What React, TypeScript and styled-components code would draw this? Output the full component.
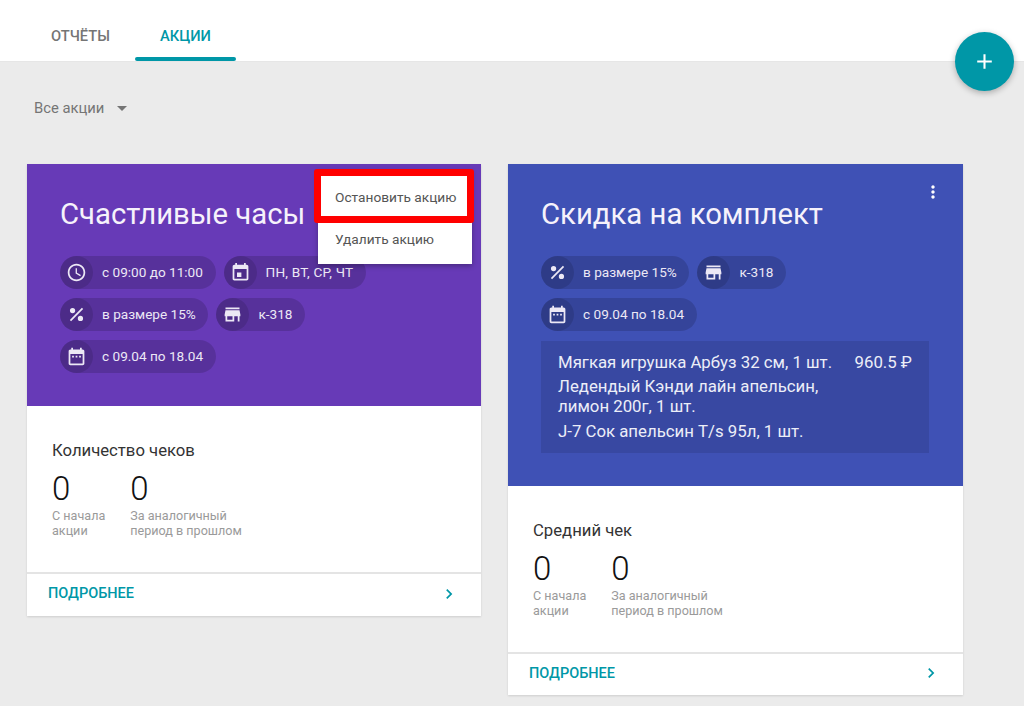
import React from "react";
import styled, { createGlobalStyle } from "styled-components";

const Global = createGlobalStyle`
  html, body { margin: 0; padding: 0; background: #ebebeb; overflow: hidden; }
  body { font-family: Roboto, "Liberation Sans", sans-serif; }
  * { box-sizing: border-box; }
`;

const TEAL = "#0097a7";

const Page = styled.div`
  position: relative;
  width: 1024px;
  height: 706px;
  overflow: hidden;
`;
const Header = styled.header`
  height: 62px;
  background: #fff;
  border-bottom: 1px solid #e6e6e6;
  display: flex;
  padding-left: 26px;
`;
const Tab = styled.div<{ $active?: boolean }>`
  position: relative;
  height: 61px;
  width: ${(p) => (p.$active ? 101 : 109)}px;
  padding-top: 27px;
  text-align: center;
  font-size: 14.7px;
  line-height: 18px;
  font-weight: 500;
  color: ${(p) => (p.$active ? TEAL : "#757575")};
  ${(p) =>
    p.$active &&
    `&::after { content: ""; position: absolute; left: 0; right: 0; bottom: 0; height: 4px; border-radius: 2px; background: ${TEAL}; }`}
`;
const Fab = styled.button`
  position: absolute;
  left: 955px;
  top: 32px;
  width: 59px;
  height: 59px;
  border: 0;
  border-radius: 50%;
  padding: 0;
  background: ${TEAL};
  box-shadow: 0 2px 6px rgba(0, 0, 0, 0.28);
  display: flex;
  align-items: center;
  justify-content: center;
  color: #fff;
`;
const Filter = styled.div`
  display: flex;
  align-items: center;
  height: 20px;
  margin: 36px 0 0 34px;
  font-size: 14.8px;
  color: #757575;
`;
const Caret = styled.span`
  width: 0;
  height: 0;
  margin-left: 13px;
  border-left: 5px solid transparent;
  border-right: 5px solid transparent;
  border-top: 5px solid #757575;
`;
const Cards = styled.main`
  display: flex;
  align-items: flex-start;
  gap: 27px;
  margin: 46px 0 0 27px;
`;
const Card = styled.section<{ $width: number }>`
  position: relative;
  flex: none;
  width: ${(p) => p.$width}px;
  background: #fff;
  box-shadow: 0 1px 2px rgba(0, 0, 0, 0.12);
`;
const Top = styled.div<{ $color: string }>`
  background: ${(p) => p.$color};
  padding: 32px 34px 33px 33px;
  color: #fff;
`;
const Title = styled.h2`
  margin: 0 0 24px;
  font-size: 29.3px;
  line-height: 36px;
  font-weight: 400;
  color: #f6f2fb;
`;
const Chips = styled.div`
  display: flex;
  flex-wrap: wrap;
  gap: 9px 8px;
`;
const Chip = styled.div<{ $tracking?: number }>`
  display: flex;
  align-items: center;
  height: 33px;
  border-radius: 17px;
  background: rgba(0, 0, 0, 0.15);
  padding: 0 12.6px 2px 0;
  font-size: 13.6px;
  letter-spacing: ${(p) => p.$tracking ?? 0}px;
  color: #ece8f5;
  white-space: nowrap;
`;
const ChipIcon = styled.span`
  width: 33px;
  height: 33px;
  margin: 0 9px -2px 0;
  border-radius: 50%;
  background: rgba(0, 0, 0, 0.12);
  display: flex;
  align-items: center;
  justify-content: center;
`;
const Products = styled.div`
  margin-top: 10px;
  padding: 11px 17px 12px;
  background: rgba(0, 0, 0, 0.1);
  font-size: 16.8px;
  line-height: 20px;
  color: #eceef8;
`;
const Product = styled.div`
  display: flex;
  justify-content: space-between;
  margin-bottom: 4.4px;
  &:last-child { margin-bottom: 0; }
`;
const ProductName = styled.span`
  width: 290px;
`;
const Body = styled.div`
  height: 166px;
  padding: 35px 25px 0;
`;
const Metric = styled.div`
  font-size: 16.7px;
  line-height: 20px;
  color: #333;
`;
const Stats = styled.div`
  display: flex;
  gap: 25px;
  margin-top: 9px;
`;
const Stat = styled.div``;
const Num = styled.div`
  font-size: 33px;
  line-height: 38px;
  font-weight: 300;
  color: #111;
`;
const Label = styled.div`
  font-size: 12.6px;
  line-height: 15px;
  color: #9a9a9a;
`;
const Footer = styled.div`
  height: 43.5px;
  border-top: 2px solid #e4e4e4;
  padding: 0 22px 2.5px 21px;
  display: flex;
  align-items: center;
  justify-content: space-between;
  font-size: 14.5px;
  font-weight: 500;
  color: ${TEAL};
`;
const Kebab = styled.span`
  position: absolute;
  top: 18px;
  right: 20px;
  width: 20px;
  height: 20px;
  color: #fff;
`;
const Menu = styled.div`
  position: absolute;
  top: 6px;
  right: 9px;
  width: 154px;
  height: 94px;
  padding-top: 6px;
  background: #fff;
  box-shadow: 0 2px 5px rgba(0, 0, 0, 0.3);
  z-index: 2;
`;
const MenuItem = styled.div`
  position: relative;
  height: 42px;
  padding-left: 17px;
  font-size: 13.7px;
  line-height: 42px;
  color: #555;
`;
const Highlight = styled.span`
  position: absolute;
  left: -4px;
  right: -2px;
  top: -7px;
  height: 54px;
  border: 7px solid #ff0000;
  border-radius: 3px;
`;

const P = {
  clock: "M11.99 2C6.47 2 2 6.48 2 12s4.47 10 9.99 10C17.52 22 22 17.52 22 12S17.52 2 11.99 2zM12 20c-4.42 0-8-3.58-8-8s3.58-8 8-8 8 3.58 8 8-3.58 8-8 8zM12.5 7H11v6l5.25 3.15.75-1.23-4.5-2.67z",
  event: "M13 12h-5v5h5v-5zM16 1v2H8V1H6v2H5c-1.11 0-1.99.9-1.99 2L3 19c0 1.1.89 2 2 2h14c1.1 0 2-.9 2-2V5c0-1.1-.9-2-2-2h-1V1h-2zm3 18H5V8h14v11z",
  range: "M9 11H7v2h2v-2zm4 0h-2v2h2v-2zm4 0h-2v2h2v-2zm2-7h-1V2h-2v2H8V2H6v2H5c-1.11 0-1.99.9-1.99 2L3 20c0 1.1.89 2 2 2h14c1.1 0 2-.9 2-2V6c0-1.1-.9-2-2-2zm0 16H5V9h14v11z",
  store: "M20 4H4v2h16V4zm1 10v-2l-1-5H4l-1 5v2h1v6h10v-6h4v6h2v-6h1zm-9 4H6v-4h6v4z",
  percent: "M7.5 4.5a3 3 0 1 1 0 6 3 3 0 0 1 0-6zM16.5 13.5a3 3 0 1 1 0 6 3 3 0 0 1 0-6zM18.2 4.4l1.4 1.4L5.8 19.6l-1.4-1.4z",
  more: "M12 8c1.1 0 2-.9 2-2s-.9-2-2-2-2 .9-2 2 .9 2 2 2zm0 2c-1.1 0-2 .9-2 2s.9 2 2 2 2-.9 2-2-.9-2-2-2zm0 6c-1.1 0-2 .9-2 2s.9 2 2 2 2-.9 2-2-.9-2-2-2z",
  chevron: "M10 6L8.59 7.41 13.17 12l-4.58 4.59L10 18l6-6z",
  add: "M19 13h-6v6h-2v-6H5v-2h6V5h2v6h6v2z",
};

const Icon = ({ d, size = 20 }: { d: string; size?: number }) => (
  <svg width={size} height={size} viewBox="0 0 24 24" fill="currentColor" aria-hidden="true">
    <path d={d} />
  </svg>
);

const InfoChip = ({ d, text, tracking }: { d: string; text: string; tracking?: number }) => (
  <Chip $tracking={tracking}>
    <ChipIcon>
      <Icon d={d} size={21} />
    </ChipIcon>
    {text}
  </Chip>
);

const CardFoot = () => (
  <Footer>
    ПОДРОБНЕЕ
    <Icon d={P.chevron} size={20} />
  </Footer>
);

const Summary = ({ title }: { title: string }) => (
  <Body>
    <Metric>{title}</Metric>
    <Stats>
      <Stat>
        <Num>0</Num>
        <Label>
          С начала
          <br />
          акции
        </Label>
      </Stat>
      <Stat>
        <Num>0</Num>
        <Label>
          За аналогичный
          <br />
          период в прошлом
        </Label>
      </Stat>
    </Stats>
  </Body>
);

export default function App() {
  return (
    <Page>
      <Global />
      <Header>
        <Tab>ОТЧЁТЫ</Tab>
        <Tab $active>АКЦИИ</Tab>
      </Header>
      <Fab aria-label="Добавить">
        <Icon d={P.add} size={25} />
      </Fab>
      <Filter>
        Все акции
        <Caret />
      </Filter>
      <Cards>
        <Card $width={454}>
          <Top $color="#673ab7">
            <Title>Счастливые часы</Title>
            <Chips>
              <InfoChip d={P.clock} text="с 09:00 до 11:00" />
              <InfoChip d={P.event} text="ПН, ВТ, СР, ЧТ" tracking={0.2} />
              <InfoChip d={P.percent} text="в размере 15%" />
              <InfoChip d={P.store} text="к-318" />
              <InfoChip d={P.range} text="с 09.04 по 18.04" />
            </Chips>
          </Top>
          <Menu>
            <MenuItem>
              Остановить акцию
              <Highlight />
            </MenuItem>
            <MenuItem>Удалить акцию</MenuItem>
          </Menu>
          <Summary title="Количество чеков" />
          <CardFoot />
        </Card>
        <Card $width={455}>
          <Top $color="#3f51b5">
            <Title>Скидка на комплект</Title>
            <Kebab>
              <Icon d={P.more} size={20} />
            </Kebab>
            <Chips>
              <InfoChip d={P.percent} text="в размере 15%" />
              <InfoChip d={P.store} text="к-318" />
              <InfoChip d={P.range} text="с 09.04 по 18.04" />
            </Chips>
            <Products>
              <Product>
                <ProductName>Мягкая игрушка Арбуз 32 см, 1 шт.</ProductName>
                <span>960.5 ₽</span>
              </Product>
              <Product>
                <ProductName>Ледендый Кэнди лайн апельсин, лимон 200г, 1 шт.</ProductName>
              </Product>
              <Product>
                <ProductName>J-7 Сок апельсин T/s 95л, 1 шт.</ProductName>
              </Product>
            </Products>
          </Top>
          <Summary title="Средний чек" />
          <CardFoot />
        </Card>
      </Cards>
    </Page>
  );
}
